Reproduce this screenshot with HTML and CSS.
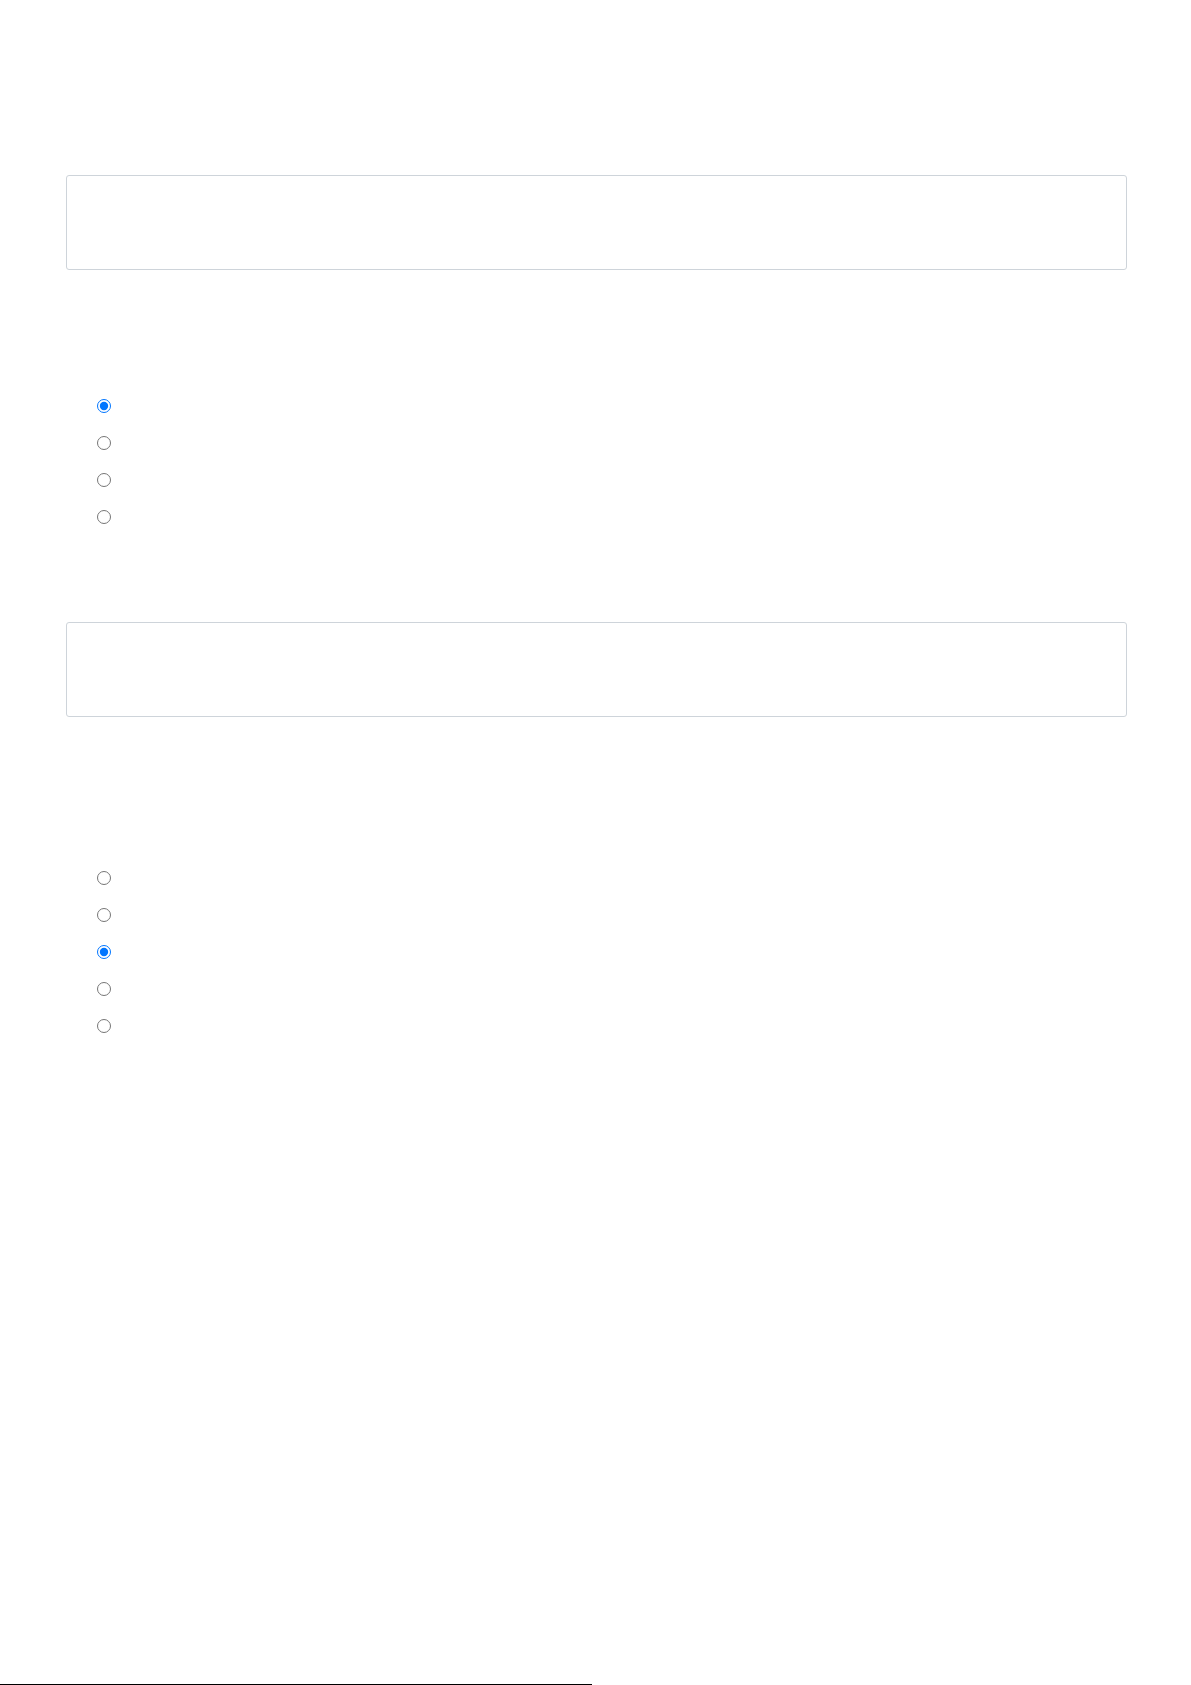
FILE: index.html
```html
<!DOCTYPE html>
<html lang="en">
<head>
<meta charset="utf-8">
<title>Form</title>
<link rel="stylesheet" href="styles.css">
</head>
<body>
<div class="page">
  <main class="content">
    <div class="field-box"></div>
    <ul class="radio-list first-list">
      <li class="radio-row"><input type="radio" name="q1" checked></li>
      <li class="radio-row"><input type="radio" name="q1"></li>
      <li class="radio-row"><input type="radio" name="q1"></li>
      <li class="radio-row"><input type="radio" name="q1"></li>
    </ul>
    <div class="field-box second-box"></div>
    <ul class="radio-list second-list">
      <li class="radio-row"><input type="radio" name="q2"></li>
      <li class="radio-row"><input type="radio" name="q2"></li>
      <li class="radio-row"><input type="radio" name="q2" checked></li>
      <li class="radio-row"><input type="radio" name="q2"></li>
      <li class="radio-row"><input type="radio" name="q2"></li>
    </ul>
  </main>
  <div class="bottom-line"></div>
</div>
</body>
</html>
```

FILE: styles.css
```css
html, body {
  margin: 0;
  padding: 0;
  background: #ffffff;
  font-family: "Liberation Sans", Arial, sans-serif;
}

.page {
  min-height: 1685px;
  display: flex;
  flex-direction: column;
}

.content {
  padding: 175px 64px 0 66px;
}

.field-box {
  height: 95px;
  box-sizing: border-box;
  border: 1px solid #ced4da;
  border-radius: 3px;
  background: #fff;
}

.radio-list {
  list-style: none;
  margin: 0;
  padding: 0 0 0 31px;
}

.first-list {
  margin-top: 117px;
}

.second-box {
  margin-top: 87px;
}

.second-list {
  margin-top: 142px;
}

.radio-row {
  height: 37px;
  display: flex;
  align-items: center;
}

.radio-row input {
  margin: 0;
  width: 14px;
  height: 14px;
}

.bottom-line {
  margin-top: auto;
  width: 592px;
  height: 1px;
  background: #000;
}
```
